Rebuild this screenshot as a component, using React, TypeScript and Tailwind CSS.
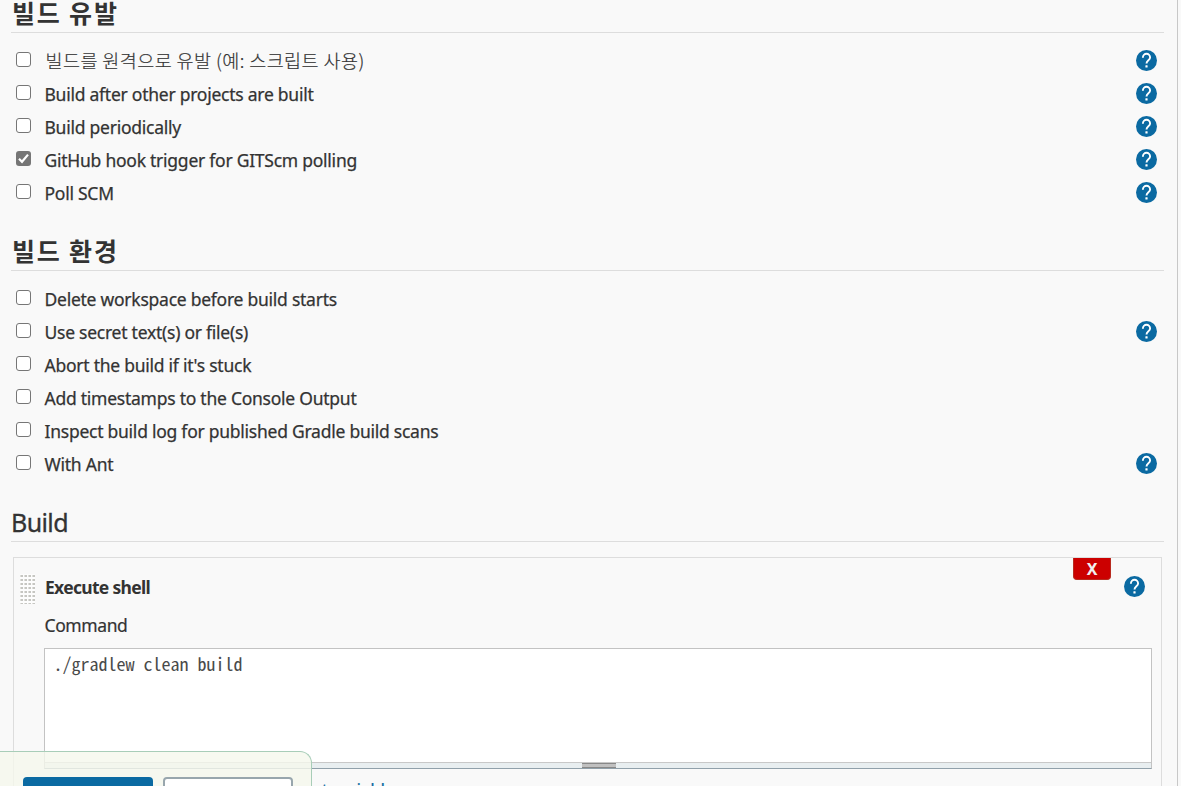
import React from "react";

type Row = { label: string; cls: string; checked?: boolean; help?: boolean };

const latin = "pt-px font-['Noto_Sans','Noto_Sans_CJK_KR',sans-serif] text-[17.5px] tracking-[-0.25px] [-webkit-text-stroke:0.25px]";
const korean = "pl-px font-['Noto_Sans_CJK_KR',sans-serif] font-light text-[18.5px] tracking-[0.42px] [-webkit-text-stroke:0.2px]";

const triggers: Row[] = [
  { label: "빌드를 원격으로 유발 (예: 스크립트 사용)", cls: korean, help: true },
  { label: "Build after other projects are built", cls: latin, help: true },
  { label: "Build periodically", cls: latin, help: true },
  { label: "GitHub hook trigger for GITScm polling", cls: latin, checked: true, help: true },
  { label: "Poll SCM", cls: latin, help: true },
];

const environment: Row[] = [
  { label: "Delete workspace before build starts", cls: latin },
  { label: "Use secret text(s) or file(s)", cls: latin, help: true },
  { label: "Abort the build if it's stuck", cls: latin },
  { label: "Add timestamps to the Console Output", cls: latin },
  { label: "Inspect build log for published Gradle build scans", cls: latin },
  { label: "With Ant", cls: latin, help: true },
];

function Help() {
  return (
    <svg width="21" height="21" viewBox="0 0 21 21" className="block shrink-0">
      <circle cx="10.5" cy="10.5" r="10.5" fill="#0b6aa2" />
      <path d="M6.9 7.8V7.4a3.6 3.6 0 0 1 7.2 0c0 2.7-3.6 2.9-3.6 6" fill="none" stroke="#fff" strokeWidth="1.9" />
      <rect x="9.4" y="15.3" width="2.2" height="2.2" rx=".5" fill="#fff" />
    </svg>
  );
}

function Check({ checked }: { checked?: boolean }) {
  if (!checked) return <span className="mt-2 size-[15px] shrink-0 rounded-[3px] border border-[#767676] bg-white" />;
  return (
    <span className="mt-2 size-[15px] shrink-0 rounded-[3px] bg-[#767676]">
      <svg width="15" height="15" viewBox="0 0 15 15" className="block">
        <path d="M3 7.8l3 3L12 3.6" fill="none" stroke="#fff" strokeWidth="2.2" />
      </svg>
    </span>
  );
}

function Option({ row }: { row: Row }) {
  return (
    <div className="flex h-[33px] shrink-0 pr-[7px] pl-[5px]">
      <Check checked={row.checked} />
      <span className={`ml-[13.5px] grow leading-[33px] whitespace-nowrap ${row.cls}`}>
        <span>{row.label}</span>
      </span>
      {row.help && (
        <span className="mt-1.5">
          <Help />
        </span>
      )}
    </div>
  );
}

export default function App() {
  return (
    <div className="relative flex h-[786px] w-[1181px] overflow-hidden bg-[#f9f9f9] text-[#333333]">
      <main className="flex w-[1178px] shrink-0 flex-col border-r border-[#c8c8c8] pr-[13px] pl-[11px]">
        <h2 className="h-[33px] shrink-0 border-b border-[#dddddd] pl-px font-['Noto_Sans_CJK_KR',sans-serif] text-[25px] leading-6 font-bold tracking-[1.8px] whitespace-nowrap">
          빌드 유발
        </h2>
        <div className="mt-[11px] flex shrink-0 flex-col">
          {triggers.map((r) => (
            <Option key={r.label} row={r} />
          ))}
        </div>
        <h2 className="mt-[22px] h-10 shrink-0 border-b border-[#dddddd] pl-px font-['Noto_Sans_CJK_KR',sans-serif] text-[25px] leading-[38px] font-bold tracking-[1.8px] whitespace-nowrap">
          빌드 환경
        </h2>
        <div className="mt-[11px] flex shrink-0 flex-col">
          {environment.map((r) => (
            <Option key={r.label} row={r} />
          ))}
        </div>
        <h2 className="mt-[22px] h-10 shrink-0 border-b border-[#dddddd] font-['Noto_Sans',sans-serif] text-[25px] leading-10 tracking-[-0.6px] whitespace-nowrap [-webkit-text-stroke:0.3px]">
          Build
        </h2>
        <section className="mt-[15px] mr-0.5 ml-0.5 flex h-[260px] shrink-0 flex-col border border-[#dddddd] pr-[9px]">
          <div className="flex h-[52px] shrink-0 items-start">
            <svg width="15" height="30" className="mt-4 ml-1.5 shrink-0">
              <defs>
                <pattern id="grip" width="4" height="4" patternUnits="userSpaceOnUse">
                  <rect width="4" height="4" fill="#fdfdfd" />
                  <rect x="0" y="1" width="3" height="2" fill="#dededa" />
                  <rect x="1" y="1" width="2" height="2" fill="#c6c6c2" />
                </pattern>
              </defs>
              <rect width="15" height="30" fill="url(#grip)" />
            </svg>
            <h3 className="ml-[10px] grow pt-[13px] font-['Noto_Sans',sans-serif] text-[17.5px] leading-[33px] font-bold tracking-[-0.7px] whitespace-nowrap">
              Execute shell
            </h3>
            <button className="h-[22px] w-[38px] rounded-b-[4px] border border-t-0 border-[#b82b20] bg-[#cc0000] pt-px font-['Noto_Sans',sans-serif] text-[16px] leading-[21px] font-bold text-[#f0f0f0]">
              X
            </button>
            <span className="mt-[18px] mr-[7px] ml-[13px]">
              <Help />
            </span>
          </div>
          <label className="h-[38px] shrink-0 pl-[30.5px] font-['Noto_Sans',sans-serif] text-[17.5px] leading-[31px] tracking-[-0.4px] whitespace-nowrap [-webkit-text-stroke:0.2px]">
            Command
          </label>
          <div className="ml-[30px] flex h-[121px] shrink-0 flex-col border border-[#c3c3c3] border-b-[#90a0aa] bg-white">
            <pre className="h-[113px] pt-[3px] pl-[8.5px] font-['Noto_Sans_Mono_CJK_KR','Liberation_Mono',monospace] text-[18px] leading-[22px] text-[#4a4a4a]">
              ./gradlew clean build
            </pre>
            <div className="flex h-1.5 justify-center border-t border-[#c8c8c8] bg-[#e8eef0]">
              <div className="ml-px h-[5px] w-[34px] border-y border-[#888888] bg-[#c0c0c0]" />
            </div>
          </div>
          <p className="pt-2 pl-[30px] font-['Noto_Sans',sans-serif] text-[17.5px] leading-[26px] tracking-[-0.38px] whitespace-nowrap [-webkit-text-stroke:0.2px]">
            See <a className="text-[#0b6aa2]">the list of available environment variables</a>
          </p>
        </section>
      </main>
      <div className="absolute bottom-0 left-0 flex h-[35px] w-[312px] gap-2.5 rounded-tr-[12px] border-t border-r border-[#a8cdb8] bg-[#f5f8ec]/80 pt-[25px] pl-[23px]">
        <div className="h-10 w-[130px] rounded-[4px] bg-[#0b6aa2]" />
        <div className="h-10 w-[130px] rounded-[4px] border-2 border-[#98a6ad] bg-white" />
      </div>
    </div>
  );
}
